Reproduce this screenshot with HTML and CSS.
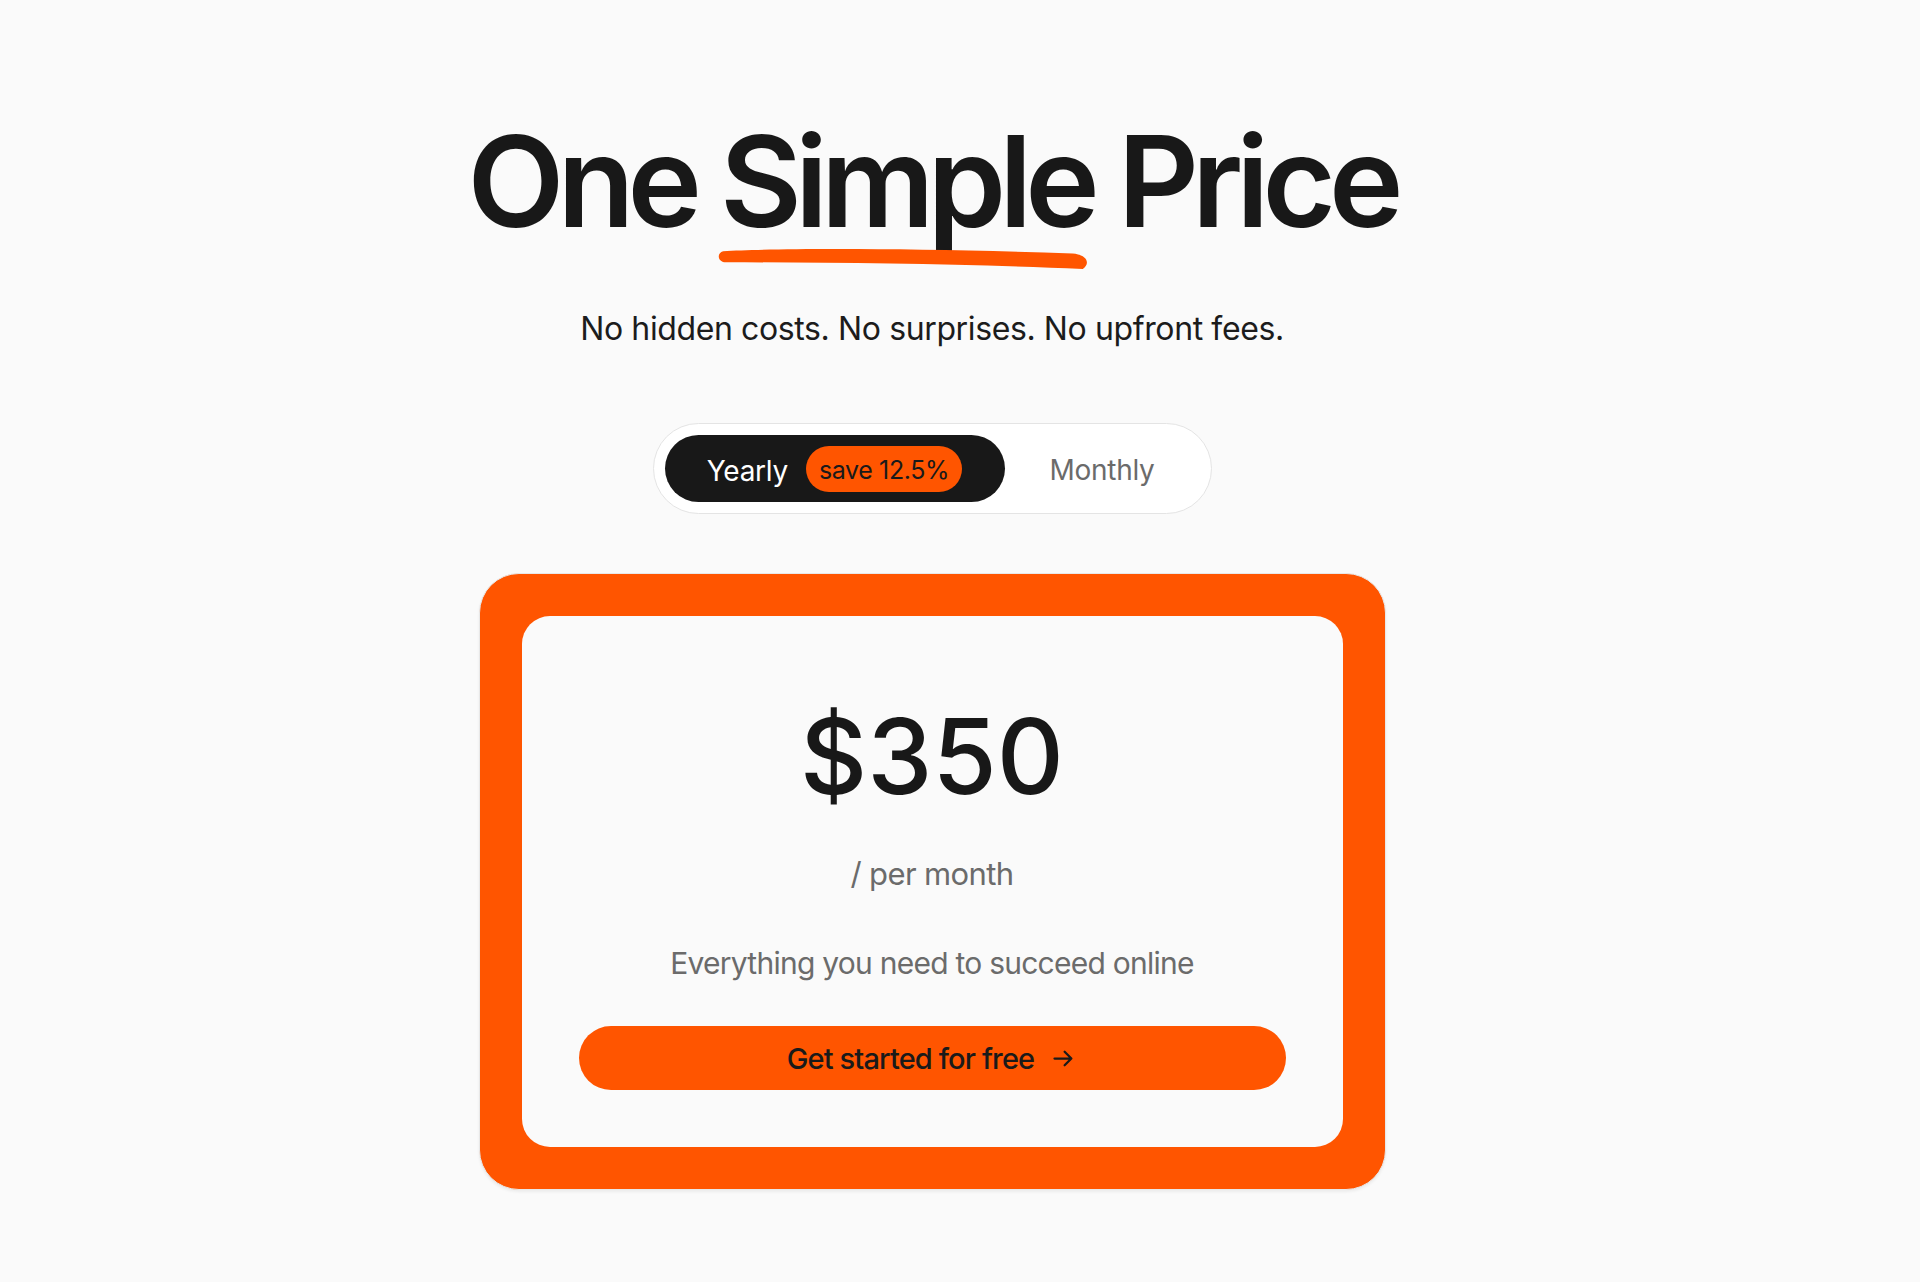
FILE: index.html
```html
<!DOCTYPE html>
<html lang="en">
<head>
<meta charset="utf-8">
<title>One Simple Price</title>
<link rel="stylesheet" href="styles.css">
</head>
<body>
<main class="pricing">
  <h1 class="title">One <span class="mark">Simple<svg class="swoosh" viewBox="0 0 370 20" preserveAspectRatio="none" aria-hidden="true"><path d="M7 3 C 60 0, 200 0, 352 5 C 366 6, 370 14, 362 19 C 260 15, 120 13, 10 13 C 2 13, 0 5, 7 3 Z" fill="#ff5500"/></svg></span> Price</h1>
  <p class="subtitle">No hidden costs. No surprises. No upfront fees.</p>

  <div class="toggle">
    <div class="toggle-option active">
      <span>Yearly</span>
      <span class="badge">save 12.5%</span>
    </div>
    <div class="toggle-option">Monthly</div>
  </div>

  <section class="card">
    <div class="card-inner">
      <div class="price">$350</div>
      <div class="period">/ per month</div>
      <p class="desc">Everything you need to succeed online</p>
      <a class="cta" href="#">Get started for free
        <svg class="arrow" viewBox="0 0 24 24" aria-hidden="true"><path d="M4 12h15M13 6l6 6-6 6" fill="none" stroke="#1a1a1a" stroke-width="2" stroke-linecap="round" stroke-linejoin="round"/></svg>
      </a>
    </div>
  </section>
</main>
</body>
</html>
```

FILE: styles.css
```css
* { box-sizing: border-box; }

html, body {
  margin: 0;
  padding: 0;
  background: #fafafa;
  color: #181818;
  font-family: Inter, "Noto Sans", sans-serif;
}

.pricing {
  display: flex;
  flex-direction: column;
  align-items: center;
  padding: 118px 56px 0 0;
  min-height: 1282px;
}

.title {
  margin: 0;
  font-size: 126px;
  line-height: 1;
  font-weight: 600;
  letter-spacing: -0.055em;
  color: #181818;
}

.mark {
  position: relative;
  display: inline-block;
}

.swoosh {
  position: absolute;
  left: -4px;
  width: calc(100% + 2px);
  top: 130px;
  height: 22px;
}

.subtitle {
  margin: 66px 0 0;
  font-size: 32px;
  line-height: 1.2;
  font-weight: 400;
  letter-spacing: -0.012em;
  color: #1c1c1c;
}

.toggle {
  margin-top: 75px;
  display: flex;
  align-items: center;
  width: 559px;
  height: 91px;
  padding: 11px;
  background: #ffffff;
  border: 1px solid #e4e4e4;
  border-radius: 46px;
}

.toggle-option {
  flex: 1;
  display: flex;
  align-items: center;
  justify-content: center;
  height: 100%;
  padding-top: 3px;
  font-size: 28px;
  letter-spacing: -0.01em;
  color: #6b6b6b;
}

.toggle-option.active {
  flex: 0 0 340px;
  gap: 18px;
  padding-top: 0;
  background: #181818;
  color: #ffffff;
  border-radius: 34px;
}

.toggle-option.active > span:first-child {
  padding-top: 4px;
}

.badge {
  display: inline-flex;
  align-items: center;
  height: 46px;
  padding: 2px 13px 0;
  background: #ff5500;
  color: #1a1a1a;
  border-radius: 23px;
  font-size: 25px;
  letter-spacing: -0.015em;
}

.card {
  margin-top: 59px;
  width: 907px;
  padding: 42px;
  background: #ff5500;
  border-radius: 40px;
  border: 1px solid #e8e8e8;
  box-shadow: 0 2px 3px rgba(0,0,0,0.06);
}

.card-inner {
  display: flex;
  flex-direction: column;
  align-items: center;
  background: #fafafa;
  border-radius: 28px;
  padding: 78px 57px 57px;
}

.price {
  font-size: 104px;
  line-height: 1.2;
  font-weight: 500;
  letter-spacing: 0;
  color: #181818;
}

.period {
  margin-top: 36px;
  font-size: 31px;
  line-height: 1.2;
  color: #6b6b6b;
  letter-spacing: -0.02em;
}

.desc {
  margin: 53px 0 0;
  font-size: 30px;
  line-height: 1.2;
  color: #6b6b6b;
  letter-spacing: -0.025em;
}

.cta {
  margin-top: 45px;
  display: flex;
  align-items: center;
  justify-content: center;
  gap: 16px;
  width: 100%;
  height: 64px;
  background: #ff5500;
  border-radius: 32px;
  color: #1a1a1a;
  text-decoration: none;
  font-size: 29px;
  font-weight: 500;
  letter-spacing: -0.03em;
}

.arrow {
  width: 27px;
  height: 27px;
}
```
